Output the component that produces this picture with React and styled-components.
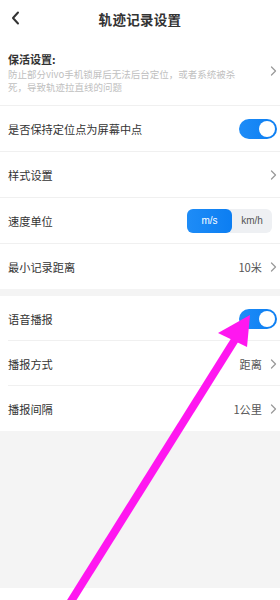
import React from 'react'
import styled, { createGlobalStyle } from 'styled-components'

const Global = createGlobalStyle`
  html, body {
    margin: 0;
    padding: 0;
    background: #f4f4f4;
  }
  body {
    font-family: 'Noto Sans CJK SC', 'Noto Sans', sans-serif;
    color: #333;
  }
`

const Page = styled.div`
  position: relative;
  width: 280px;
  height: 600px;
  overflow: hidden;
  background: #f4f4f4;
  display: flex;
  flex-direction: column;
`

const Header = styled.div`
  height: 37px;
  background: #fff;
  display: flex;
  align-items: center;
  justify-content: center;
  position: relative;
  h1 {
    margin: 0;
    font-size: 13.5px;
    font-weight: 700;
    color: #333;
    letter-spacing: 0.3px;
  }
`

const Back = styled.div`
  position: absolute;
  left: 11px;
  top: 11px;
  width: 10px;
  height: 14px;
  display: flex;
  align-items: center;
`

const Section = styled.div`
  background: #fff;
  margin-bottom: ${p => p.gap || 0}px;
`

const Row = styled.div`
  display: flex;
  align-items: center;
  justify-content: space-between;
  height: ${p => p.h || 45}px;
  padding: 0 3px 0 8px;
  position: relative;
  border-bottom: ${p => p.last ? 'none' : '1px solid #f0f0f0'};
  ${p => p.inset && !p.last ? `
    border-bottom: none;
    &::after {
      content: '';
      position: absolute;
      left: 8px;
      right: 0;
      bottom: 0;
      height: 1px;
      background: #f0f0f0;
    }
  ` : ''}
`

const Label = styled.span`
  font-size: 11.2px;
  color: #333;
`

const Block = styled.div`
  display: flex;
  flex-direction: column;
  gap: 1px;
  padding-top: 2px;
`

const Title = styled.span`
  font-size: 11px;
  font-weight: 700;
  color: #333;
`

const Desc = styled.span`
  font-size: 9.5px;
  line-height: 13px;
  color: #c0c0c0;
`

const Right = styled.div`
  display: flex;
  align-items: center;
  gap: 8px;
`

const Value = styled.span`
  font-size: 11.2px;
  color: #555;
`

const Toggle = styled.div`
  width: 38px;
  height: 20px;
  border-radius: 10px;
  background: linear-gradient(90deg, #1e8cf7, #0c7ef2);
  display: flex;
  align-items: center;
  justify-content: flex-end;
  padding: 0 2px;
  box-sizing: border-box;
  span {
    width: 16px;
    height: 16px;
    border-radius: 50%;
    background: #fff;
  }
`

const Segment = styled.div`
  display: flex;
  width: 85px;
  height: 24px;
  border-radius: 6px;
  background: #eef0f3;
  margin-right: 5px;
`

const SegItem = styled.div`
  flex: ${p => p.active ? '0 0 45px' : 1};
  display: flex;
  align-items: center;
  justify-content: center;
  border-radius: 6px;
  font-family: 'Liberation Sans', Arial, sans-serif;
  font-size: 10px;
  color: ${p => p.active ? '#fff' : '#555'};
  background: ${p => p.active ? 'linear-gradient(90deg, #1e8cf7, #0c7ef2)' : 'transparent'};
`

const Filler = styled.div`
  flex: 1;
  background: #f4f4f4;
`

const Footer = styled.div`
  height: 12px;
  background: #fff;
`

const Overlay = styled.svg`
  position: absolute;
  left: 0;
  top: 0;
  pointer-events: none;
`

const Chevron = () => (
  <svg width="7" height="10" viewBox="0 0 7 10">
    <path d="M1.5 1 L5.5 5 L1.5 9" fill="none" stroke="#9a9a9a" strokeWidth="1.3" strokeLinecap="round" strokeLinejoin="round" />
  </svg>
)

export default function App () {
  return (
    <Page>
      <Global />
      <Header>
        <Back>
          <svg width="9" height="14" viewBox="0 0 9 14">
            <path d="M7 1.5 L2 7 L7 12.5" fill="none" stroke="#333" strokeWidth="2" strokeLinecap="round" strokeLinejoin="round" />
          </svg>
        </Back>
        <h1>轨迹记录设置</h1>
      </Header>

      <Section gap={7}>
        <Row h={68}>
          <Block>
            <Title>保活设置:</Title>
            <Desc>防止部分vivo手机锁屏后无法后台定位，或者系统被杀<br />死，导致轨迹拉直线的问题</Desc>
          </Block>
          <Chevron />
        </Row>
        <Row>
          <Label>是否保持定位点为屏幕中点</Label>
          <Toggle><span /></Toggle>
        </Row>
        <Row>
          <Label>样式设置</Label>
          <Chevron />
        </Row>
        <Row>
          <Label>速度单位</Label>
          <Segment>
            <SegItem active>m/s</SegItem>
            <SegItem>km/h</SegItem>
          </Segment>
        </Row>
        <Row last>
          <Label>最小记录距离</Label>
          <Right>
            <Value>10米</Value>
            <Chevron />
          </Right>
        </Row>
      </Section>

      <Section>
        <Row inset>
          <Label>语音播报</Label>
          <Toggle><span /></Toggle>
        </Row>
        <Row inset>
          <Label>播报方式</Label>
          <Right>
            <Value>距离</Value>
            <Chevron />
          </Right>
        </Row>
        <Row inset last>
          <Label>播报间隔</Label>
          <Right>
            <Value>1公里</Value>
            <Chevron />
          </Right>
        </Row>
      </Section>

      <Filler />
      <Footer />

      <Overlay width="280" height="600" viewBox="0 0 280 600">
        <line x1="68" y1="606" x2="236" y2="338" stroke="#ff17f0" strokeWidth="8" />
        <polygon points="250,315 218,333 247,347" fill="#ff17f0" />
      </Overlay>
    </Page>
  )
}
